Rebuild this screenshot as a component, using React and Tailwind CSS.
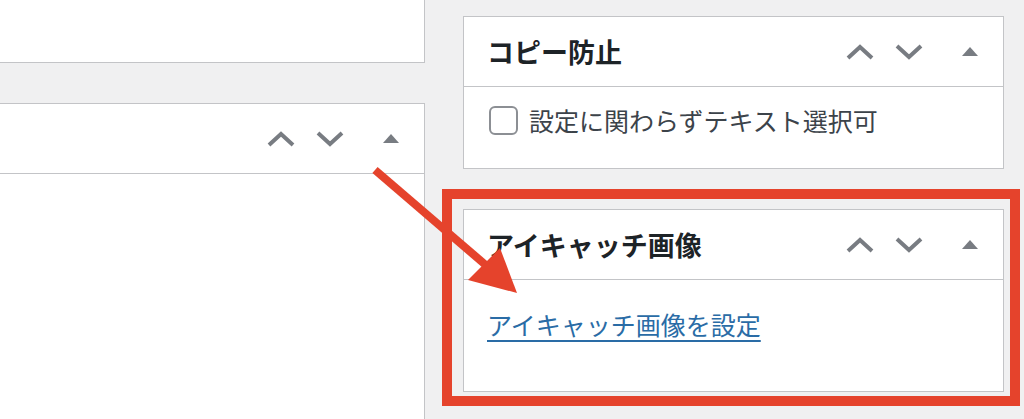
import React from "react";

const jp = { fontFamily: '"Noto Sans CJK JP", "Noto Sans", sans-serif' };

const ChevronUp = () => (
  <svg width="28" height="16" viewBox="0 0 28 16" className="block">
    <polyline points="2,14 14,3 26,14" fill="none" stroke="#787c82" strokeWidth="4" />
  </svg>
);

const ChevronDown = () => (
  <svg width="28" height="16" viewBox="0 0 28 16" className="block">
    <polyline points="2,2 14,13 26,2" fill="none" stroke="#787c82" strokeWidth="4" />
  </svg>
);

const Toggle = () => (
  <svg width="16" height="9" viewBox="0 0 16 9" className="block">
    <polygon points="0,9 8,0 16,9" fill="#787c82" />
  </svg>
);

const BoxControls = () => (
  <div className="ml-auto flex items-center">
    <ChevronUp />
    <div className="ml-[21px]">
      <ChevronDown />
    </div>
    <div className="ml-[39px] mr-[25px]">
      <Toggle />
    </div>
  </div>
);

const BoxHeader = ({ title }) => (
  <div className="flex h-[70px] items-center border-b border-[#c3c4c7] pl-[23px]">
    {title && (
      <h2 className="text-[27px] font-bold leading-none text-[#1d2327]" style={jp}>
        {title}
      </h2>
    )}
    <BoxControls />
  </div>
);

export default function App() {
  return (
    <div className="relative flex h-[419px] w-[1024px] overflow-hidden bg-[#f0f0f1]" style={jp}>
      {/* left editor column */}
      <div className="flex w-[425px] shrink-0 flex-col">
        <div className="h-[63px] border-r border-b border-[#c3c4c7] bg-white" />
        <div className="mt-[40px] flex-1 border-t border-r border-[#c3c4c7] bg-white">
          <BoxHeader />
        </div>
      </div>

      {/* sidebar */}
      <div className="ml-[38px] flex w-[541px] shrink-0 flex-col pt-[16px]">
        <div className="border border-[#c3c4c7] bg-white">
          <BoxHeader title="コピー防止" />
          <div className="h-[81px] pl-[25px] pt-[19px]">
            <label className="flex items-center">
              <span className="block h-[29px] w-[29px] rounded-[6px] border-2 border-[#8c8f94] bg-white" />
              <span className="ml-[11px] text-[25px] leading-none text-[#3c434a]">
                設定に関わらずテキスト選択可
              </span>
            </label>
          </div>
        </div>

        <div className="-ml-[21px] -mr-[16px] mt-[20px] border-[10px] border-[#e5432c] pb-[4px] pl-[11px] pr-[6px] pt-[10px]">
          <div className="border border-[#c3c4c7] bg-white">
            <BoxHeader title="アイキャッチ画像" />
            <div className="h-[111px] pl-[23px] pt-[26px]">
              <a className="text-[25px] leading-[36px] text-[#2a6ca6] underline underline-offset-[5px]">
                アイキャッチ画像を設定
              </a>
            </div>
          </div>
        </div>
      </div>

      {/* annotation arrow */}
      <svg className="pointer-events-none absolute inset-0" width="1024" height="419" viewBox="0 0 1024 419">
        <line x1="375" y1="170" x2="488" y2="267" stroke="#e5432c" strokeWidth="8" />
        <polygon points="517,293 468,280 500,248" fill="#e5432c" />
      </svg>
    </div>
  );
}
